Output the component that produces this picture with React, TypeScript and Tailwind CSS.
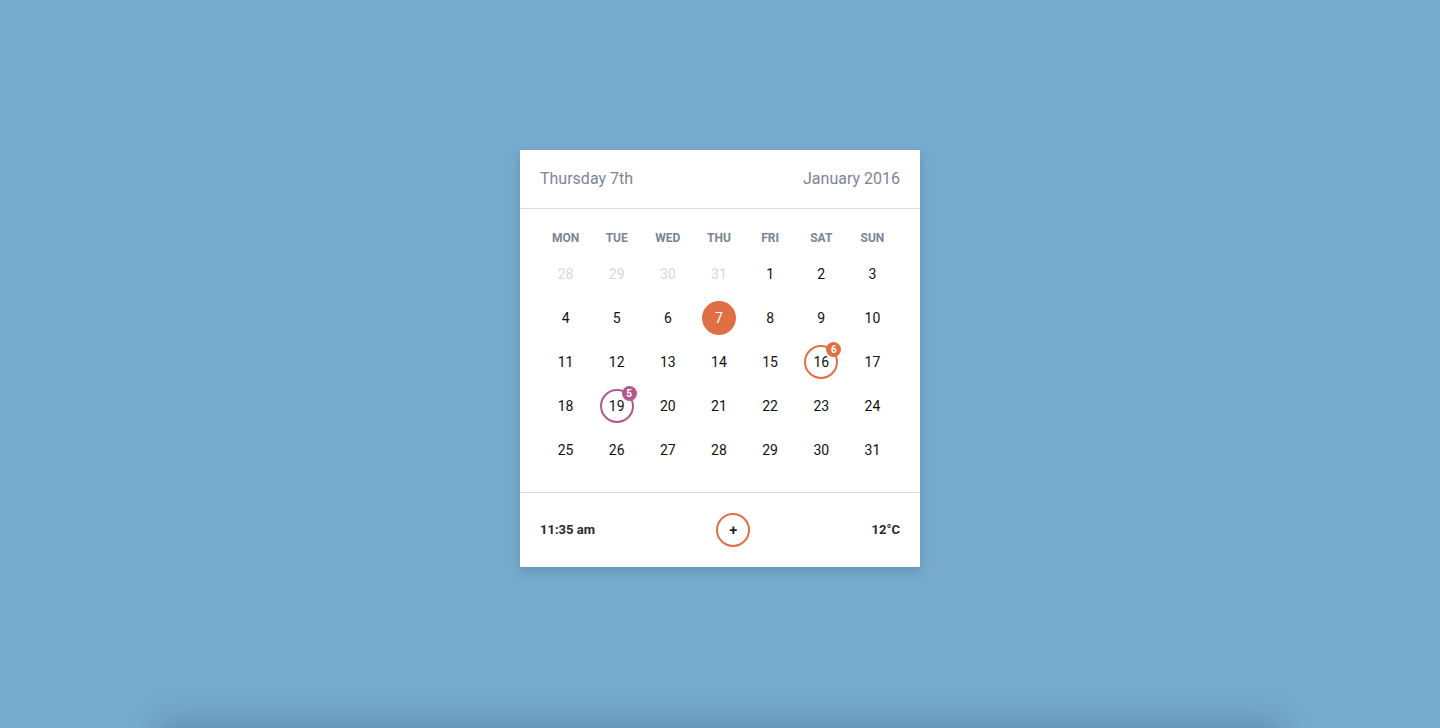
const weeks: number[][] = [
  [28, 29, 30, 31, 1, 2, 3],
  [4, 5, 6, 7, 8, 9, 10],
  [11, 12, 13, 14, 15, 16, 17],
  [18, 19, 20, 21, 22, 23, 24],
  [25, 26, 27, 28, 29, 30, 31],
]

const dayNames = ['MON', 'TUE', 'WED', 'THU', 'FRI', 'SAT', 'SUN']

function DayCell({ day, muted }: { day: number; muted: boolean }) {
  if (muted) {
    return <span className="text-[#d6d8dc]">{day}</span>
  }
  if (day === 7) {
    return (
      <span className="flex h-[34px] w-[34px] items-center justify-center rounded-full bg-[#e06f45] text-white">
        {day}
      </span>
    )
  }
  if (day === 16 || day === 19) {
    const orange = day === 16
    return (
      <span
        className={
          orange
            ? 'relative flex h-[34px] w-[34px] items-center justify-center rounded-full border-2 border-[#e06f45]'
            : 'relative flex h-[34px] w-[34px] items-center justify-center rounded-full border-2 border-[#b3588b]'
        }
      >
        {day}
        <span
          className={
            orange
              ? 'absolute -right-[5px] -top-[5px] flex h-[15px] w-[15px] items-center justify-center rounded-full bg-[#e06f45] text-[10px] font-bold text-white'
              : 'absolute -right-[5px] -top-[5px] flex h-[15px] w-[15px] items-center justify-center rounded-full bg-[#b3588b] text-[10px] font-bold text-white'
          }
        >
          {orange ? 6 : 5}
        </span>
      </span>
    )
  }
  return <span>{day}</span>
}

export default function App() {
  return (
    <div className="min-h-screen bg-[#77abcd] font-['Roboto',sans-serif]">
      <div className="flex h-[728px] items-start justify-center pt-[150px]">
        <div className="w-[400px] bg-white shadow-[0_4px_10px_rgba(40,70,100,0.25)]">
          {/* Header */}
          <div className="flex h-[59px] items-center justify-between border-b border-[#dcdcdc] px-5 text-[16px] text-[#7d8594]">
            <span>Thursday 7th</span>
            <span>January 2016</span>
          </div>

          {/* Calendar */}
          <div className="pb-[20px] pl-5 pr-[22px] pt-[18px]">
            <div className="grid h-[22px] grid-cols-7 items-center text-center text-[12px] font-bold text-[#7b8594]">
              {dayNames.map((d) => (
                <span key={d}>{d}</span>
              ))}
            </div>
            <div className="mt-[3px]">
              {weeks.map((week, wi) => (
                <div key={wi} className="grid h-[44px] grid-cols-7 items-center text-[14px] text-[#111]">
                  {week.map((day, di) => (
                    <div key={di} className="flex items-center justify-center">
                      <DayCell day={day} muted={wi === 0 && day > 20} />
                    </div>
                  ))}
                </div>
              ))}
            </div>
          </div>

          {/* Footer */}
          <div className="flex h-[75px] items-center justify-between border-t border-[#dcdcdc] px-5 text-[13px] font-bold text-[#2a2a2a]">
            <span>11:35 am</span>
            <button className="flex h-[34px] w-[34px] items-center justify-center rounded-full border-2 border-[#e06f45] text-[14px] font-bold text-[#1e1e1e]">
              +
            </button>
            <span>12°C</span>
          </div>
        </div>
      </div>
      <div className="mx-auto h-[40px] w-[1120px] bg-[#77abcd] shadow-[0_-8px_30px_rgba(40,80,120,0.3)]" />
    </div>
  )
}
